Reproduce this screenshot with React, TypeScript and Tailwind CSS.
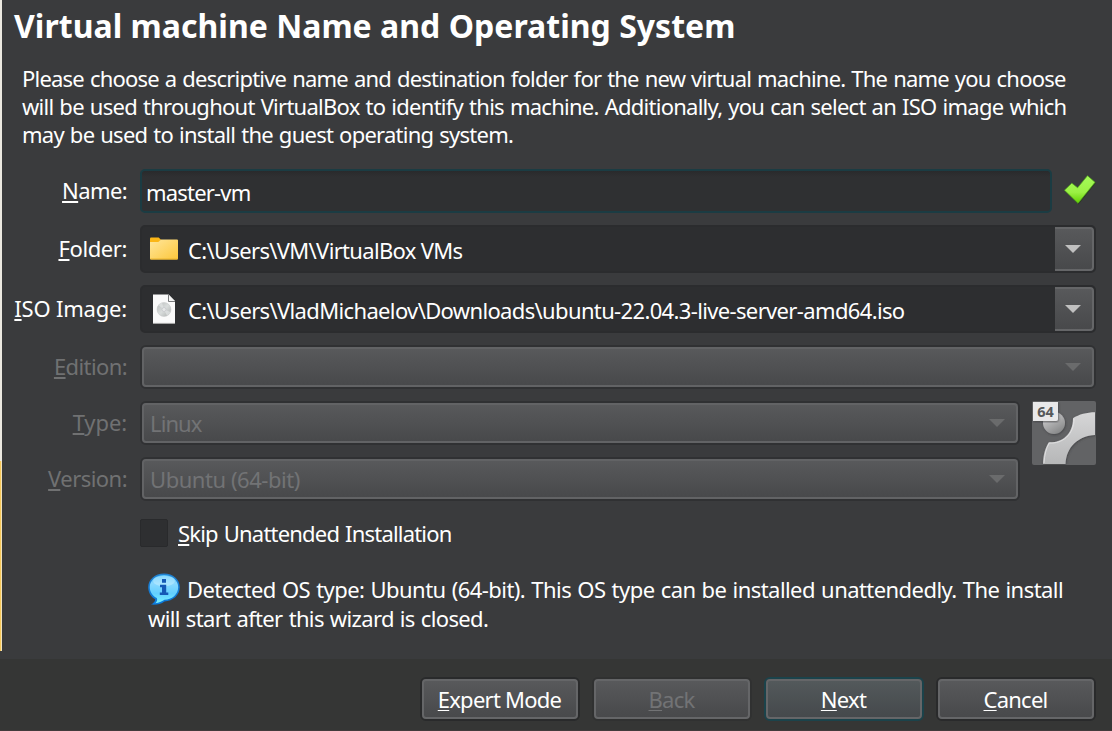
import type { ReactNode } from "react";

function Mnemonic({ text, thin = false }: { text: string; thin?: boolean }) {
  return (
    <>
      <span
        className={
          thin
            ? "underline decoration-1 underline-offset-[2px] [text-decoration-skip-ink:none]"
            : "underline decoration-2 underline-offset-[2px] [text-decoration-skip-ink:none]"
        }
      >
        {text[0]}
      </span>
      {text.slice(1)}
    </>
  );
}

function Row({ label, spacing, disabled = false, tall = false, children }: {
  label: string; spacing: string; disabled?: boolean; tall?: boolean; children: ReactNode;
}) {
  return (
    <div className={`flex items-center gap-3 ${tall ? "h-12" : "h-11"}`}>
      <span className={`w-[126px] shrink-0 pr-px pb-[2px] text-right ${spacing} ${disabled ? "text-[#707172]" : "text-white"}`}>
        <Mnemonic text={label} />
      </span>
      {children}
    </div>
  );
}

function Arrow({ dim = false }: { dim?: boolean }) {
  return (
    <svg width="16" height="8" viewBox="0 0 16 8" className="shrink-0">
      <path d="M0 0H16L8 8Z" fill={dim ? "#6a6b6c" : "#c0c0c0"} />
    </svg>
  );
}

function PathCombo({ icon, text, spacing }: { icon: ReactNode; text: string; spacing: string }) {
  return (
    <div className="flex h-12 w-[956px] rounded-[5px] border-2 border-[#2b2c2e] bg-[#2d2e30]">
      <div className="flex flex-1 items-center">
        <div className="flex w-[46px] pl-2">{icon}</div>
        <span className={`pt-[2px] ${spacing}`}>{text}</span>
      </div>
      <div className="flex w-[39px] items-center justify-center rounded-r-[4px] border-y-2 border-r-2 border-[#656668] bg-linear-to-b from-[#58595b] to-[#48494b] pr-px">
        <Arrow />
      </div>
    </div>
  );
}

function DisabledCombo({ text = "", wide = false, spacing = "" }: { text?: string; wide?: boolean; spacing?: string }) {
  return (
    <div className={`h-11 rounded-[6px] border-2 border-[#303133] ${wide ? "w-[956px]" : "w-[880px]"}`}>
      <div className="flex h-10 items-center justify-between rounded-[4px] border-2 border-[#626365] bg-linear-to-b from-[#58595b] to-[#48494b] pr-[11px] pl-[6px] text-[#727375]">
        <span className={spacing}>{text}</span>
        <Arrow dim />
      </div>
    </div>
  );
}

function Button({ text, disabled = false, primary = false }: { text: string; disabled?: boolean; primary?: boolean }) {
  return (
    <button
      type="button"
      disabled={disabled}
      className={`h-11 w-40 rounded-[6px] border-2 ${primary ? "border-[#1b434b]" : disabled ? "border-[#303131]" : "border-[#292a2b]"}`}
    >
      <span
        className={`flex h-10 items-center justify-center rounded-[4px] border-2 border-[#656668] bg-linear-to-b pr-px tracking-[-0.75px] ${
          primary ? "from-[#53595b] to-[#45494c]" : "from-[#58595b] to-[#48494b]"
        } ${disabled ? "text-[#727375]" : "text-white"}`}
      >
        <span>
          <Mnemonic text={text} thin />
        </span>
      </span>
    </button>
  );
}

function CheckIcon() {
  return (
    <svg width="34" height="32" viewBox="0 0 34 32">
      <defs>
        <linearGradient id="check" x1="0" y1="0" x2="0" y2="1">
          <stop offset="0" stopColor="#a5fb5a" />
          <stop offset="0.6" stopColor="#9bf044" />
          <stop offset="1" stopColor="#62d000" />
        </linearGradient>
      </defs>
      <path d="M1.5 16.5L8.5 9.5L14.5 14L24.5 1.5L32.3 8.5L15 30Z" fill="#233a12" opacity="0.6" transform="translate(0.6 0.6)" />
      <path d="M1.5 16.2L8.8 9.2L14.6 13.8L24.5 1.7L32 8.3L15 29.3Z" fill="url(#check)" stroke="#55ad1c" strokeWidth="0.7" />
    </svg>
  );
}

function FolderIcon() {
  return (
    <svg width="28" height="24" viewBox="0 0 28 24">
      <defs>
        <linearGradient id="folder" x1="0" y1="0" x2="1" y2="1">
          <stop offset="0" stopColor="#ffe69b" />
          <stop offset="1" stopColor="#fcc73b" />
        </linearGradient>
      </defs>
      <path d="M0 1.5Q0 .5 1 .5H8.7L11 2.7L8.7 6H0Z" fill="#fbb616" />
      <path d="M0 5H8.3L11 2.5H27Q28 2.5 28 3.5V21.5Q28 22.5 27 22.5H1Q0 22.5 0 21.5Z" fill="url(#folder)" />
      <path d="M.5 22H27.5" stroke="#edb52d" />
    </svg>
  );
}

function DiscFileIcon() {
  return (
    <svg width="22" height="30" viewBox="0 0 22 30" className="ml-[3px]">
      <defs>
        <linearGradient id="disc" x1="0" y1="0" x2="1" y2="1">
          <stop offset="0" stopColor="#b9bbbb" />
          <stop offset="0.5" stopColor="#d9dddc" />
          <stop offset="1" stopColor="#aaadac" />
        </linearGradient>
      </defs>
      <path d="M0 .5H15.5L22 7V29.5H0Z" fill="#fafafa" />
      <path d="M15.5 .5V7.5H22" fill="#f4f4f4" stroke="#77797a" />
      <path d="M0 29.3H22" stroke="#b5b5b5" strokeWidth="0.6" />
      <circle cx="11" cy="15.5" r="7" fill="url(#disc)" stroke="#c4c7c6" strokeWidth="0.5" />
      <path d="M11 15.5L5.5 11.3A7 7 0 0 1 9 8.8ZM11 15.5L17.5 18A7 7 0 0 1 14 21.8Z" fill="#e2e6e5" opacity="0.7" />
      <circle cx="11" cy="15.5" r="2" fill="#e6e8e7" stroke="#bdbdc5" strokeWidth="0.6" />
    </svg>
  );
}

function InfoIcon() {
  return (
    <svg width="32" height="32" viewBox="0 0 32 32">
      <defs>
        <linearGradient id="info" x1="0" y1="0" x2="0" y2="1">
          <stop offset="0" stopColor="#4cc0fc" />
          <stop offset="0.3" stopColor="#8ad9ff" />
          <stop offset="0.65" stopColor="#62cfff" />
          <stop offset="1" stopColor="#78f2ff" />
        </linearGradient>
        <linearGradient id="rim" x1="0" y1="0" x2="0" y2="1">
          <stop offset="0" stopColor="#2180ce" />
          <stop offset="1" stopColor="#0a79dc" />
        </linearGradient>
      </defs>
      <path d="M16 .4C25 .4 31.8 6.4 31.8 14.2C31.8 22 24.8 28 16.5 28.4C13 31.2 8.5 32 3 31.6C5.6 30.2 7.4 28.2 7.2 26.3C3 23.8 .2 19.6 .2 14.2C.2 6.4 7 .4 16 .4Z" fill="url(#rim)" />
      <path d="M16 2C24.4 2 30.2 7.5 30.2 14.2C30.2 21.4 23.8 26.6 16.5 26.7C13.5 28.2 11 30 7.4 30.3C9 28.5 9.6 26.8 8.8 25C4.8 22.9 1.8 19 1.8 14.2C1.8 7.5 7.6 2 16 2Z" fill="url(#info)" />
      <ellipse cx="16" cy="8" rx="11" ry="5.2" fill="#c6efff" opacity="0.5" />
      <path d="M14 6H18V9.8H14ZM12 11.8H18.2V19.5H20.3V22H11.8V19.5H14V14.2H12Z" fill="#1459b5" />
    </svg>
  );
}

function OsIcon() {
  return (
    <svg width="64" height="64" viewBox="0 0 64 64" className="shrink-0">
      <defs>
        <linearGradient id="band" x1="0" y1="0" x2="0" y2="1">
          <stop offset="0" stopColor="#d6d6d7" />
          <stop offset="1" stopColor="#b6b7b8" />
        </linearGradient>
        <linearGradient id="ball" x1="0" y1="0" x2="0.6" y2="1">
          <stop offset="0.3" stopColor="#c2c2c3" />
          <stop offset="1" stopColor="#898a8b" />
        </linearGradient>
        <filter id="shade" x="-10%" y="-10%" width="120%" height="120%">
          <feDropShadow dx="0.5" dy="0.8" stdDeviation="0.8" floodColor="#38393a" floodOpacity="0.8" />
        </filter>
      </defs>
      <rect width="64" height="64" rx="2" fill="#626365" />
      <circle cx="22" cy="22" r="11" fill="url(#ball)" filter="url(#shade)" />
      <path d="M11 63C11 55 13 47 16.8 41.2C29 42 41 34 41 17.2C47 13.2 55 11.3 63 11.2V34C46 35 34.3 46 33.5 63Z" fill="url(#band)" filter="url(#shade)" />
      <path d="M12 62C12.5 54 14 47.5 17.3 42C30 43 42 34 42 17.8" fill="none" stroke="#e7e7e8" strokeWidth="0.8" />
      <path d="M1 1H26V18Q26 20 24 20H1Z" fill="#e8e8e9" filter="url(#shade)" />
      <text x="5.2" y="16.3" fontFamily="'Noto Sans', sans-serif" fontWeight="700" fontSize="14.5" fill="#56595b">64</text>
    </svg>
  );
}

export default function App() {
  return (
    <div className="flex h-[731px] w-[1112px] overflow-hidden bg-[#3a3b3d] font-['Noto_Sans',sans-serif] text-[22px] leading-[28px] whitespace-nowrap text-white">
      <div className="flex w-[2px] shrink-0 flex-col">
        <div className="h-[461px] bg-[#ebe8e1]" />
        <div className="h-[190px] border-r border-[#f2e3bd] bg-[#f8c858]" />
        <div className="h-2 bg-[#3a3b3d]" />
        <div className="flex-1 bg-[#353635]" />
      </div>
      <div className="flex flex-1 flex-col">
        <main className="h-[659px]">
          <h1 className="h-16 pt-[6px] pl-3 text-[32px] leading-[40px] font-bold tracking-[0.02px]">
            Virtual machine Name and Operating System
          </h1>
          <div className="h-[105px] pl-5 [word-spacing:1px]">
            <p className="tracking-[-0.785px]">
              Please choose a descriptive name and destination folder for the new virtual machine. The name you choose
            </p>
            <p className="tracking-[-0.735px]">
              will be used throughout VirtualBox to identify this machine. Additionally, you can select an ISO image which
            </p>
            <p className="tracking-[-0.75px]">may be used to install the guest operating system.</p>
          </div>

          <div className="flex flex-col gap-3">
            <Row label="Name:" spacing="tracking-[-0.6px]">
              <div className="flex h-11 w-[912px] items-center rounded-[5px] border-2 border-[#1b3c43] bg-linear-to-b from-[#292a2c] to-[#2f3032] to-15% pt-px pl-1 tracking-[-0.8px]">
                master-vm
              </div>
              <div className="-ml-[1px] pb-[2px]">
                <CheckIcon />
              </div>
            </Row>
            <Row label="Folder:" spacing="tracking-[-0.4px]" tall>
              <PathCombo icon={<FolderIcon />} text="C:\Users\VM\VirtualBox VMs" spacing="tracking-[-0.67px]" />
            </Row>
            <Row label="ISO Image:" spacing="tracking-[-0.2px]" tall>
              <PathCombo
                icon={<DiscFileIcon />}
                text="C:\Users\VladMichaelov\Downloads\ubuntu-22.04.3-live-server-amd64.iso"
                spacing="tracking-[-0.645px]"
              />
            </Row>
            <Row label="Edition:" spacing="tracking-[-0.6px]" disabled>
              <DisabledCombo wide />
            </Row>
            <div className="flex gap-3">
              <div className="flex flex-col gap-3">
                <Row label="Type:" spacing="tracking-[-0.1px]" disabled>
                  <DisabledCombo text="Linux" spacing="tracking-[-0.9px]" />
                </Row>
                <Row label="Version:" spacing="tracking-[-0.55px]" disabled>
                  <DisabledCombo text="Ubuntu (64-bit)" spacing="tracking-[-0.45px]" />
                </Row>
              </div>
              <OsIcon />
            </div>
          </div>

          <label className="mt-[18px] ml-[138px] flex h-7 items-center gap-[10px] tracking-[-0.8px] [word-spacing:1px]">
            <span className="h-7 w-7 rounded-[2px] border border-[#292a2c] bg-[#2e2f31]" />
            <span>
              <Mnemonic text="Skip Unattended Installation" />
            </span>
          </label>

          <div className="mt-[26px] ml-[146px] [word-spacing:1px]">
            <div className="flex h-8 items-center gap-[7px] tracking-[-0.56px]">
              <InfoIcon />
              <span>Detected OS type: Ubuntu (64-bit). This OS type can be installed unattendedly. The install</span>
            </div>
            <p className="-mt-px tracking-[-0.65px]">will start after this wizard is closed.</p>
          </div>
        </main>

        <footer className="-ml-[2px] flex h-[72px] items-start justify-end gap-3 border-b border-[#423b3c] bg-[#353635] pt-[18px] pr-4">
          <Button text="Expert Mode" />
          <Button text="Back" disabled />
          <Button text="Next" primary />
          <Button text="Cancel" />
        </footer>
      </div>
    </div>
  );
}
